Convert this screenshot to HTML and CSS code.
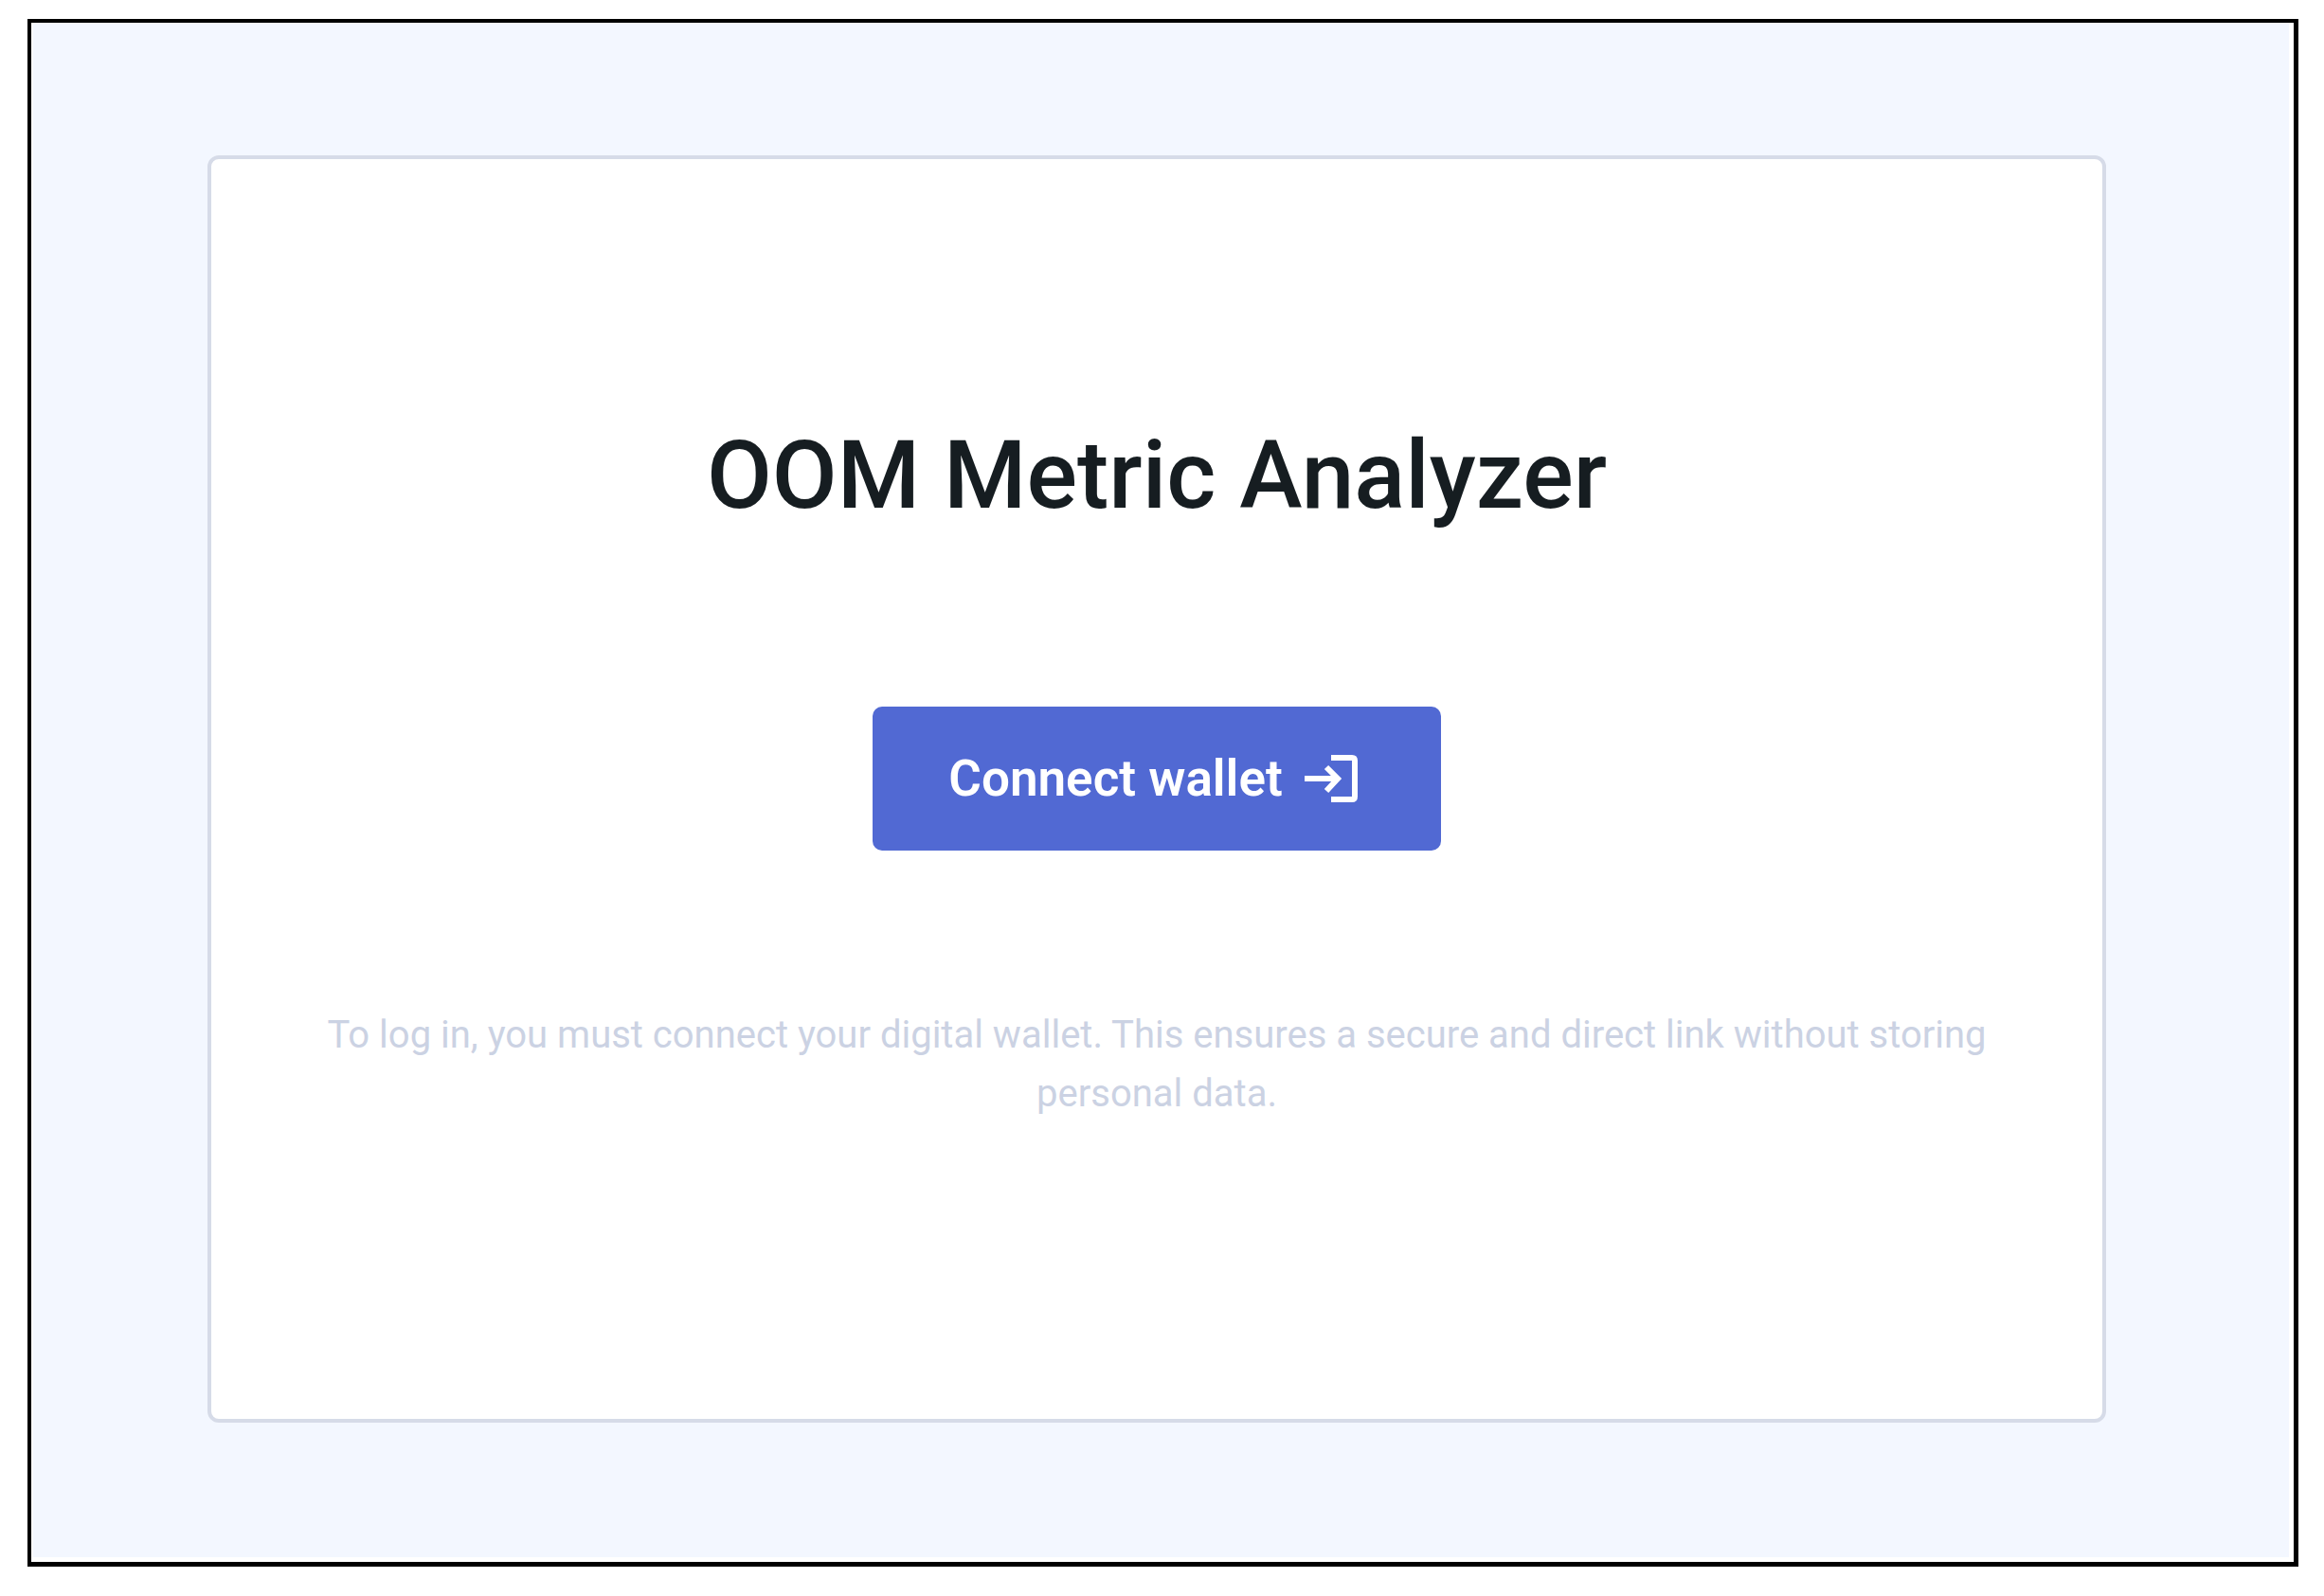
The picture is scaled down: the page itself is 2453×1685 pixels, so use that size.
FILE: index.html
```html
<!DOCTYPE html>
<html lang="en">
<head>
    <meta charset="UTF-8">
    <meta name="viewport" content="width=device-width, initial-scale=1.0">
    <title>OOM Metric Analyzer</title>
    <link rel="stylesheet" href="styles.css">
</head>
<body>
    <div class="frame">
        <main class="page">
            <section class="login-card">
                <h1>OOM Metric Analyzer</h1>
                <button type="button" class="connect-button">
                    Connect wallet
                    <svg class="login-icon" viewBox="0 0 58 52" aria-hidden="true">
                        <path d="M1 26H36"/>
                        <path d="M24 14L36 26L24 39"/>
                        <path d="M29 4H51Q54 4 54 7V45Q54 48 51 48H29"/>
                    </svg>
                </button>
                <p class="hint">To log in, you must connect your digital wallet. This ensures a secure and direct link without storing personal data.</p>
            </section>
        </main>
    </div>
</body>
</html>
```

FILE: styles.css
```css
* {
    box-sizing: border-box;
}
body {
    font-family: Roboto, Arial, sans-serif;
    background-color: white;
    margin: 0;
    min-height: 100vh;
    padding: 20px 27px 31px 29px;
    display: flex;
}
.frame {
    flex: 1;
    display: flex;
    border: 4px solid black;
    border-right-width: 5px;
    border-bottom-width: 5px;
    padding: 0 5px 5px 2px;
}
.page {
    flex: 1;
    display: flex;
    background-color: #f3f7ff;
    padding: 140px 193px 142px 184px;
}
.login-card {
    flex: 1;
    display: flex;
    flex-direction: column;
    align-items: center;
    background-color: white;
    padding: 274px 80px 80px;
    border: 4px solid #d6dbe8;
    border-radius: 12px;
}
h1 {
    margin: 0 0 184px;
    font-size: 100px;
    font-weight: 500;
    line-height: 120px;
    text-align: center;
    color: #161d21;
}
.connect-button {
    display: flex;
    align-items: center;
    gap: 22px;
    padding: 46px 87px 46px 80px;
    border: none;
    border-radius: 10px;
    background-color: #5169d3;
    color: white;
    font-family: inherit;
    font-size: 53px;
    font-weight: 600;
    line-height: 60px;
    cursor: pointer;
}
.connect-button:hover {
    background-color: #4159c4;
}
.login-icon {
    width: 58px;
    height: 52px;
    fill: none;
    stroke: white;
    stroke-width: 6;
}
.hint {
    margin: 164px 0 0;
    font-size: 40px;
    line-height: 62px;
    text-align: center;
    color: #cbd2e3;
}
```
